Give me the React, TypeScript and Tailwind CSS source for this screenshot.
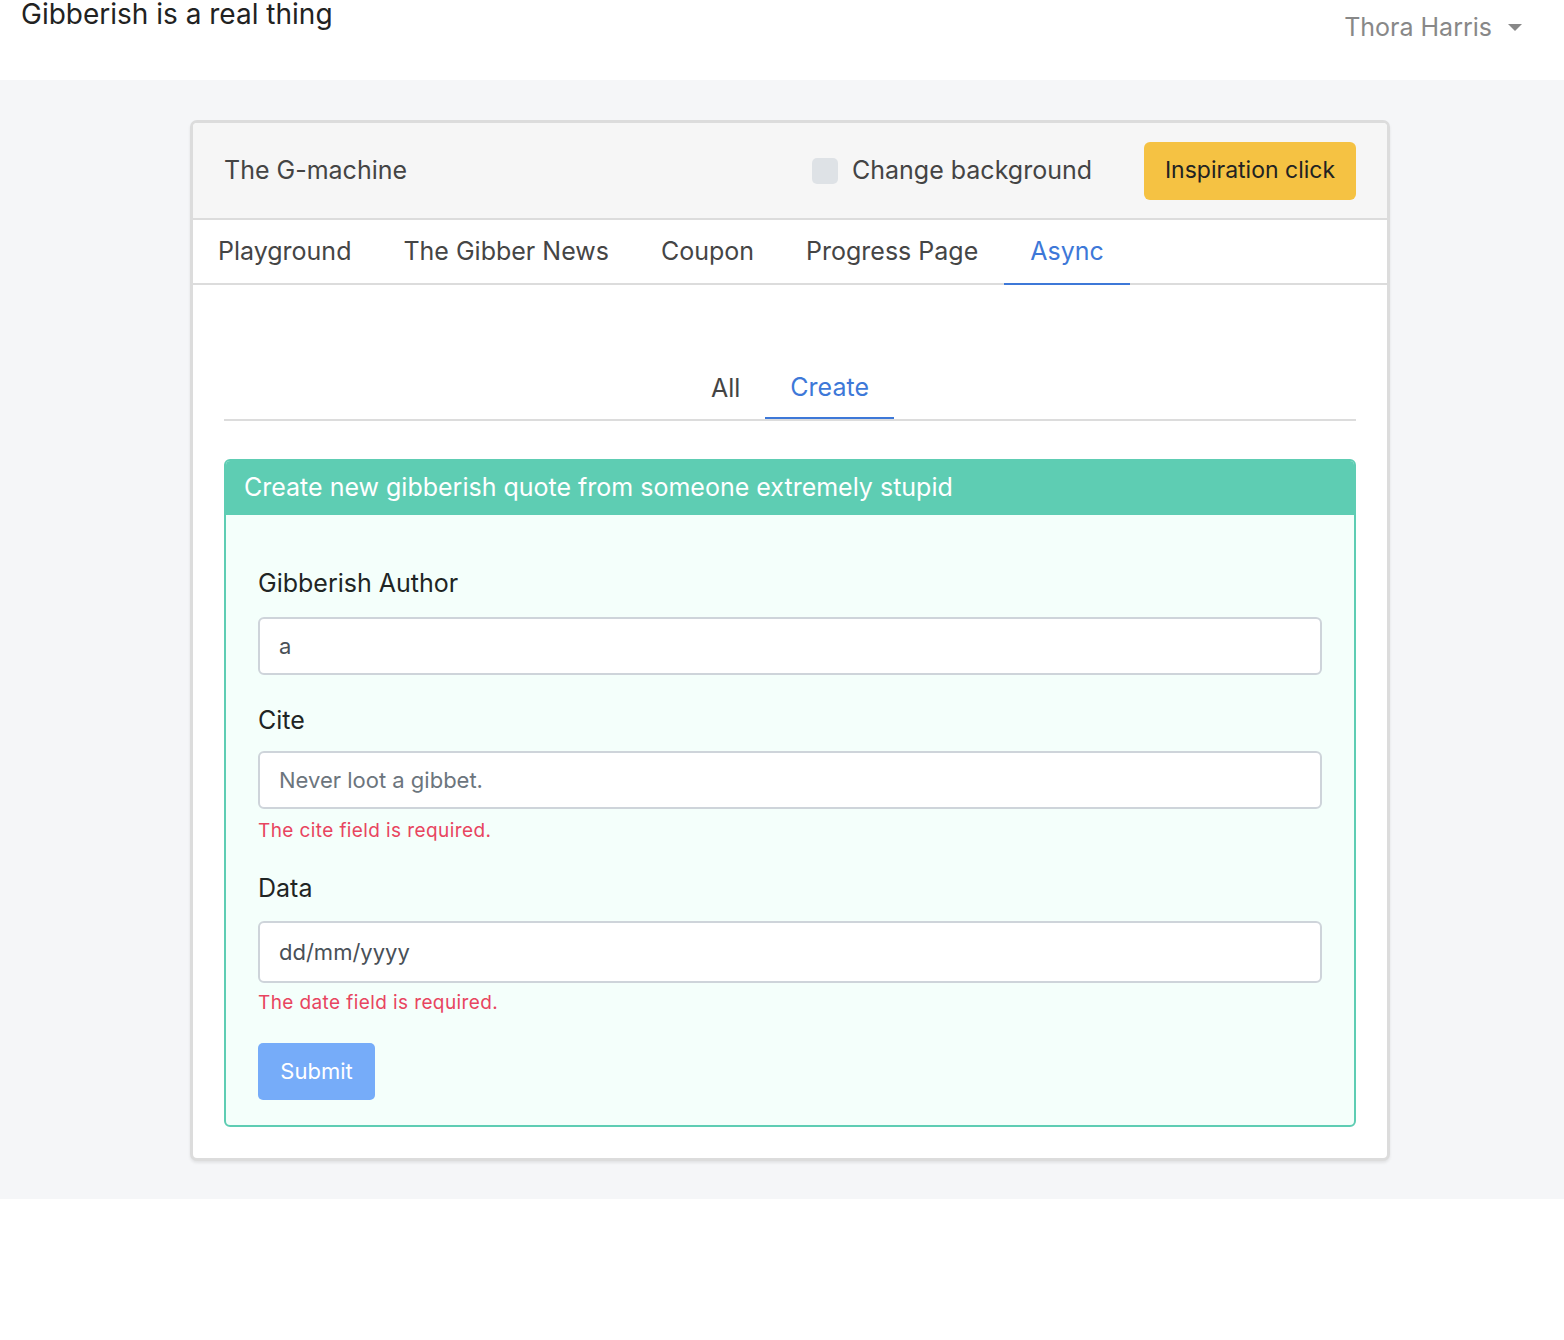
import React from "react";

const font = { fontFamily: "Inter, 'Noto Sans', sans-serif" };

export default function App() {
  return (
    <div className="min-h-[1340px] bg-white text-[#212529]" style={font}>
      {/* top bar */}
      <div className="h-[80px] bg-white flex justify-between items-start">
        <div className="ml-[21px] mt-[-4px] text-[28px] leading-[36px] text-[#222]">Gibberish is a real thing</div>
        <div className="mr-[42px] mt-[9px] flex items-center text-[25px] leading-[36px] text-[#888]">
          <span>Thora Harris</span>
          <span className="ml-[16px] w-0 h-0 border-l-[7px] border-r-[7px] border-t-[7px] border-l-transparent border-r-transparent border-t-[#888]" />
        </div>
      </div>

      {/* main */}
      <div className="bg-[#f5f6f8] pt-[40px] pb-[38px]">
        <div className="ml-[190px] w-[1200px] bg-white border-[3px] border-[#dcdcdc] rounded-[7px] shadow-[0_2px_3px_rgba(0,0,0,0.08)] overflow-hidden">
          {/* card header */}
          <div className="h-[97px] bg-[#f6f6f6] border-b-[2px] border-[#dcdcdc] flex items-center pl-[31px] pr-[31px]">
            <div className="text-[25px] text-[#444] flex-1">The G-machine</div>
            <div className="flex items-center mr-[52px]">
              <span className="w-[26px] h-[26px] rounded-[5px] bg-[#dee2e6] mr-[14px]" />
              <span className="text-[25px] text-[#444]">Change background</span>
            </div>
            <button className="h-[58px] w-[212px] rounded-[6px] bg-[#f5c243] text-[23px] text-[#222]">Inspiration click</button>
          </div>

          {/* tabs */}
          <div className="h-[65px] border-b-[2px] border-[#dcdcdc] flex items-stretch pl-[25px]">
            {["Playground", "The Gibber News", "Coupon", "Progress Page"].map((t) => (
              <div key={t} className="px-[26px] first:pl-0 flex items-center text-[25px] text-[#454545]">{t}</div>
            ))}
            <div className="px-[26px] flex items-center text-[25px] text-[#3d78d8] border-b-[2px] border-[#3d78d8] mb-[-2px]">Async</div>
          </div>

          {/* body */}
          <div className="px-[31px] pt-[74px] pb-[31px]">
            <div className="border-b-[2px] border-[#dcdcdc] flex justify-center">
              <div className="px-[25px] h-[60px] flex items-center text-[25px] text-[#444]">All</div>
              <div className="px-[25px] h-[60px] flex items-center text-[25px] text-[#3d78d8] border-b-[2px] border-[#3d78d8] mb-[-2px]">Create</div>
            </div>

            <div className="mt-[38px] rounded-[6px] border-[2px] border-[#5ecdb3] bg-[#f4fffb] overflow-hidden">
              <div className="h-[54px] bg-[#5ecdb3] flex items-center px-[18px] text-[25px] text-white">
                Create new gibberish quote from someone extremely stupid
              </div>
              <div className="px-[32px] pt-[50px] pb-[25px]">
                <div className="text-[25px] leading-[36px] text-[#1f2524]">Gibberish Author</div>
                <div className="mt-[16px] h-[58px] bg-white border-[2px] border-[#ced4da] rounded-[6px] flex items-center px-[19px] text-[22px] text-[#495057]">a</div>

                <div className="mt-[27px] text-[25px] leading-[36px] text-[#1f2524]">Cite</div>
                <div className="mt-[13px] h-[58px] bg-white border-[2px] border-[#ced4da] rounded-[6px] flex items-center px-[19px] text-[22px] text-[#6c757d]">Never loot a gibbet.</div>
                <div className="mt-[8px] text-[19px] leading-[27px] tracking-[0.4px] text-[#e8455f]">The cite field is required.</div>

                <div className="mt-[26px] text-[25px] leading-[36px] text-[#1f2524]">Data</div>
                <div className="mt-[15px] h-[62px] bg-white border-[2px] border-[#ced4da] rounded-[6px] flex items-center px-[19px] text-[22px] text-[#495057]">dd/mm/yyyy</div>
                <div className="mt-[6px] text-[19px] leading-[27px] tracking-[0.4px] text-[#e8455f]">The date field is required.</div>

                <button className="mt-[27px] h-[57px] w-[117px] rounded-[5px] bg-[#76acf9] text-[22px] text-white">Submit</button>
              </div>
            </div>
          </div>
        </div>
      </div>
    </div>
  );
}
